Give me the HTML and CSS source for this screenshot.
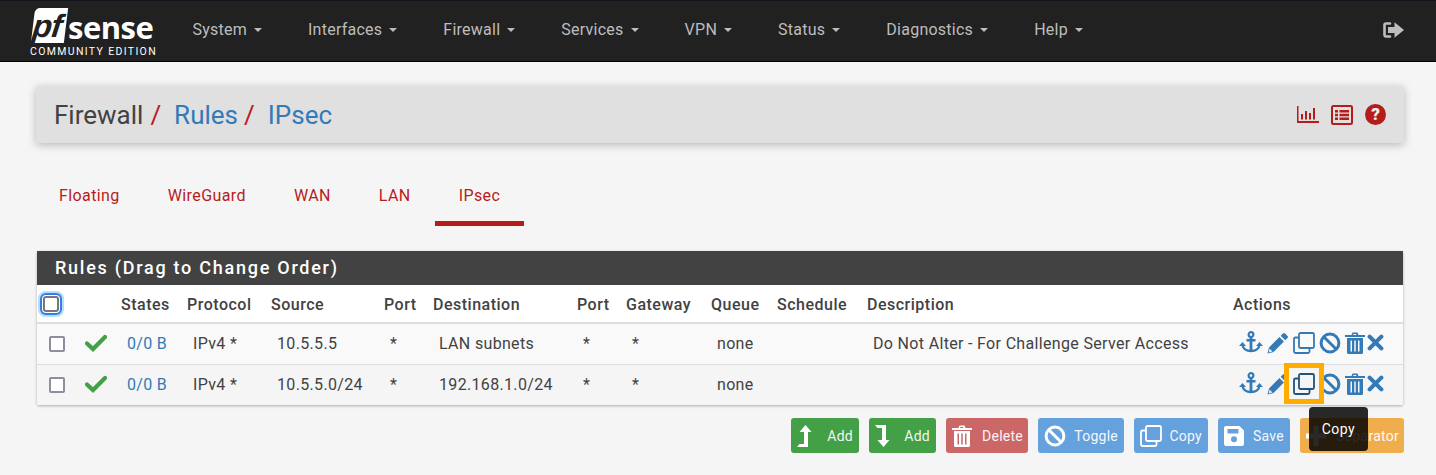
FILE: index.html
```html
<!DOCTYPE html>
<html lang="en">
<head>
<meta charset="utf-8">
<title>Firewall / Rules / IPsec</title>
<link rel="stylesheet" href="styles.css">
</head>
<body>
<svg class="defs" width="0" height="0" aria-hidden="true">
  <symbol id="i-anchor" viewBox="0 0 24 24"><circle cx="12" cy="3.6" r="2.4" fill="none" stroke="currentColor" stroke-width="2.2"/><path d="M10.6 6h2.8v14.2h-2.800zM7.500 8h9v2.400h-9z" fill="currentColor"/><path d="M3.500 13.500c.3 4 3.800 6.500 8.500 6.500s8.200-2.500 8.500-6.500" fill="none" stroke="currentColor" stroke-width="2.400"/><path d="M0 15l3.500-4 3.500 4zM17 15l3.500-4 3.500 4z" fill="currentColor"/></symbol>
  <symbol id="i-pencil" viewBox="0 0 22 22"><path d="M16 1.500a1.500 1.500 0 0 1 2.100 0l2.400 2.400a1.500 1.500 0 0 1 0 2.100l-2.300 2.300-4.500-4.500zM12.400 5.100l4.500 4.500L6.500 20l-6 1.500 1.500-6z" fill="currentColor"/><path d="M2.500 16.500l3 3-3.800 1z" fill="#fff" opacity=".85"/></symbol>
  <symbol id="i-copy" viewBox="0 0 22 22"><rect x="6" y="1" width="15" height="15" rx="1.500" fill="none" stroke="currentColor" stroke-width="1.800"/><path d="M6 5.500H2.500A1.500 1.500 0 0 0 1 7v12.500A1.500 1.500 0 0 0 2.500 21H15a1.500 1.500 0 0 0 1.500-1.500V16" fill="none" stroke="currentColor" stroke-width="1.800"/></symbol>
  <symbol id="i-ban" viewBox="0 0 22 22"><circle cx="11" cy="11" r="8.900" fill="none" stroke="currentColor" stroke-width="3"/><path d="M4.700 4.700l12.600 12.600" stroke="currentColor" stroke-width="3"/></symbol>
  <symbol id="i-trash" viewBox="0 0 20 22"><path d="M0 3h20v2H0zM6.500 3l1-2.500h5l1 2.500h-2l-.500-1h-2.500l-.5 1z" fill="currentColor"/><path d="M2 6h16v14.500a1.500 1.500 0 0 1-1.500 1.500h-13A1.500 1.500 0 0 1 2 20.500zM5.500 8.500V19.500h1.500V8.500zM9.250 8.500V19.500h1.500V8.500zM13 8.500V19.500h1.500V8.500z" fill="currentColor" fill-rule="evenodd"/></symbol>
  <symbol id="i-times" viewBox="0 0 18 18"><path d="M2.800 2.800l12.400 12.400M15.200 2.800L2.800 15.200" stroke="currentColor" stroke-width="4.400" stroke-linecap="round" fill="none"/></symbol>
  <symbol id="i-check" viewBox="0 0 22 18"><path d="M2 9.500l6 5.500L20 3" fill="none" stroke="currentColor" stroke-width="4.200" stroke-linecap="round"/></symbol>
  <symbol id="i-up" viewBox="0 0 15 22"><path d="M8.500 0l6 7h-3.500v15H0l2.500-3H7V7H2.500z" fill="currentColor"/></symbol>
  <symbol id="i-down" viewBox="0 0 15 22"><path d="M8.500 22l6-7h-3.500V0H0l2.500 3H7v12H2.500z" fill="currentColor"/></symbol>
  <symbol id="i-save" viewBox="0 0 20 20"><path d="M2 0h13.500L20 4.500V18a2 2 0 0 1-2 2H2a2 2 0 0 1-2-2V2a2 2 0 0 1 2-2zM3.500 3v4.500h11V3zM10 10.200a3 3 0 1 0 0 6 3 3 0 0 0 0-6z" fill="currentColor" fill-rule="evenodd"/></symbol>
  <symbol id="i-plus" viewBox="0 0 20 20"><path d="M7.500 0h5v7.500H20v5h-7.500V20h-5v-7.500H0v-5h7.500z" fill="currentColor"/></symbol>
  <symbol id="i-signout" viewBox="0 0 22 18"><path d="M8 2.500H4A1.500 1.500 0 0 0 2.500 4v10A1.500 1.500 0 0 0 4 15.500h4" fill="none" stroke="currentColor" stroke-width="2.600" stroke-linecap="round"/><path d="M6 6h6.500V1.200L22 9l-9.500 7.800V12H6z" fill="currentColor"/></symbol>
  <symbol id="i-chart" viewBox="0 0 22 17"><path d="M0 0h1.500v15H22v2H0zM4 8h2v5.500H4zM8 5h2v8.500H8zM12 7h2v6.500h-2zM16 2h2v11.500h-2z" fill="currentColor"/></symbol>
  <symbol id="i-list" viewBox="0 0 22 20"><rect x="1" y="1" width="20" height="18" rx="1.500" fill="none" stroke="currentColor" stroke-width="2"/><path d="M4 5h3v2.500H4zM8.500 5H18v2.500H8.500zM4 8.800h3v2.500H4zM8.500 8.800H18v2.500H8.500zM4 12.600h3v2.500H4zM8.500 12.600H18v2.500H8.500z" fill="currentColor"/></symbol>
</svg>

<header class="navbar">
  <div class="brand">
    <div class="brand-mark">
      <span class="pf-box"><span class="pf-text">pf</span></span>
      <span class="sense">sense</span>
    </div>
    <div class="edition">COMMUNITY EDITION</div>
  </div>
  <nav class="menu">
    <a class="menu-item">System<i class="caret"></i></a>
    <a class="menu-item">Interfaces<i class="caret"></i></a>
    <a class="menu-item">Firewall<i class="caret"></i></a>
    <a class="menu-item">Services<i class="caret"></i></a>
    <a class="menu-item">VPN<i class="caret"></i></a>
    <a class="menu-item">Status<i class="caret"></i></a>
    <a class="menu-item">Diagnostics<i class="caret"></i></a>
    <a class="menu-item">Help<i class="caret"></i></a>
  </nav>
  <svg class="signout"><use href="#i-signout"/></svg>
</header>

<main class="page">
  <section class="page-header">
    <h1 class="crumbs">Firewall<span class="sep">/</span><a class="crumb">Rules</a><span class="sep">/</span><a class="crumb">IPsec</a></h1>
    <div class="header-icons">
      <svg class="hi hi-chart"><use href="#i-chart"/></svg>
      <svg class="hi hi-list"><use href="#i-list"/></svg>
      <span class="help">?</span>
    </div>
  </section>

  <ul class="tabs">
    <li class="tab">Floating</li>
    <li class="tab">WireGuard</li>
    <li class="tab">WAN</li>
    <li class="tab">LAN</li>
    <li class="tab active">IPsec</li>
  </ul>

  <section class="panel">
    <h2 class="panel-title">Rules (Drag to Change Order)</h2>
    <table class="rules">
      <colgroup>
        <col class="c-sel"><col class="c-st"><col class="c-states"><col class="c-proto"><col class="c-src"><col class="c-port"><col class="c-dst"><col class="c-port"><col class="c-gw"><col class="c-queue"><col class="c-sched"><col class="c-desc"><col class="c-act">
      </colgroup>
      <thead>
        <tr>
          <th><span class="cb cb-focus"></span></th><th></th><th>States</th><th>Protocol</th><th>Source</th><th>Port</th><th>Destination</th><th>Port</th><th>Gateway</th><th>Queue</th><th>Schedule</th><th>Description</th><th>Actions</th>
        </tr>
      </thead>
      <tbody>
        <tr class="odd">
          <td class="sel"><span class="cb"></span></td>
          <td class="st"><svg class="check"><use href="#i-check"/></svg></td>
          <td><a class="link">0/0 B</a></td><td>IPv4 *</td><td>10.5.5.5</td><td>*</td><td>LAN subnets</td><td>*</td><td>*</td><td>none</td><td></td><td>Do Not Alter - For Challenge Server Access</td>
          <td class="act"><div class="acts">
            <svg class="a a-anchor"><use href="#i-anchor"/></svg><svg class="a a-pencil"><use href="#i-pencil"/></svg><svg class="a a-copy"><use href="#i-copy"/></svg><svg class="a a-ban"><use href="#i-ban"/></svg><svg class="a a-trash"><use href="#i-trash"/></svg><svg class="a a-times"><use href="#i-times"/></svg>
          </div></td>
        </tr>
        <tr class="even">
          <td class="sel"><span class="cb"></span></td>
          <td class="st"><svg class="check"><use href="#i-check"/></svg></td>
          <td><a class="link">0/0 B</a></td><td>IPv4 *</td><td>10.5.5.0/24</td><td>*</td><td>192.168.1.0/24</td><td>*</td><td>*</td><td>none</td><td></td><td></td>
          <td class="act"><div class="acts">
            <svg class="a a-anchor"><use href="#i-anchor"/></svg><svg class="a a-pencil"><use href="#i-pencil"/></svg><span class="focus-wrap"><svg class="a a-copy hot"><use href="#i-copy"/></svg><span class="focus-ring"></span><span class="tooltip">Copy</span></span><svg class="a a-ban"><use href="#i-ban"/></svg><svg class="a a-trash"><use href="#i-trash"/></svg><svg class="a a-times"><use href="#i-times"/></svg>
          </div></td>
        </tr>
      </tbody>
    </table>
  </section>

  <div class="toolbar">
    <a class="btn green"><svg class="bi bi-arrow"><use href="#i-up"/></svg><span>Add</span></a>
    <a class="btn green"><svg class="bi bi-arrow"><use href="#i-down"/></svg><span>Add</span></a>
    <a class="btn red"><svg class="bi bi-trash"><use href="#i-trash"/></svg><span>Delete</span></a>
    <a class="btn blue"><svg class="bi bi-ban"><use href="#i-ban"/></svg><span>Toggle</span></a>
    <a class="btn blue"><svg class="bi bi-copy"><use href="#i-copy"/></svg><span>Copy</span></a>
    <a class="btn blue"><svg class="bi bi-save"><use href="#i-save"/></svg><span>Save</span></a>
    <a class="btn orange"><svg class="bi bi-plus"><use href="#i-plus"/></svg><span>Separator</span></a>
  </div>
</main>
</body>
</html>
```
FILE: styles.css
```css
* { box-sizing: border-box; }
html, body { margin: 0; padding: 0; }
body {
  background: #f5f5f5;
  color: #424242;
  font-family: Roboto, "Liberation Sans", sans-serif;
  font-size: 16px;
  height: 475px;
  overflow: hidden;
}
.defs { position: absolute; }

.navbar {
  display: flex;
  align-items: center;
  height: 62px;
  padding: 0 32px 0 30px;
  background: #212121;
  border-top: 1px solid #14141c;
  border-bottom: 1px solid #000;
}
.brand { width: 127px; margin-top: 3px; color: #fff; }
.brand-mark { display: flex; align-items: flex-end; height: 35px; }
.pf-box {
  display: block;
  width: 33px;
  height: 35px;
  margin-left: 3px;
  background: #fff;
  border-radius: 5px 0 0 0;
  transform: skewX(-7deg);
}
.pf-text {
  display: block;
  margin: 2px 0 0 0;
  color: #212121;
  font: italic 700 32px/32px "Liberation Sans", sans-serif;
  letter-spacing: -1px;
}
.sense {
  margin: 0 0 5px 2px;
  font: 700 31px/22px "Open Sans", sans-serif;
  letter-spacing: -.5px;
}
.edition {
  margin-top: 3px;
  font-size: 10.500px;
  line-height: 12px;
  letter-spacing: 1.350px;
  white-space: nowrap;
}
.menu { display: flex; flex: 1; margin: 0 0 3px 12.400px; }
.menu-item {
  display: flex;
  align-items: center;
  padding: 0 23px;
  color: #bdbdbd;
  font-size: 16px;
  letter-spacing: .25px;
  white-space: nowrap;
}
.caret {
  width: 0;
  height: 0;
  margin-left: 7px;
  border: 4px solid transparent;
  border-top-color: #bdbdbd;
  border-bottom: 0;
}
.signout { width: 22px; height: 18px; margin-bottom: 3px; color: #bdbdbd; }

.page { padding: 24px 32px 0 36px; }
.page-header {
  display: flex;
  align-items: center;
  justify-content: space-between;
  height: 57px;
  padding: 0 18px;
  background: #e0e0e0;
  border-radius: 3px;
  box-shadow: 0 2px 8px rgba(0, 0, 0, .25);
}
.crumbs { margin: 0; font-size: 26px; font-weight: 400; color: #424242; }
.sep { margin: 0 13px 0 7px; color: #b71c1c; }
.crumb { color: #337ab7; }
.crumb + .sep { margin-left: 6px; }
.header-icons { display: flex; align-items: center; gap: 12px; color: #b71c1c; }
.hi { display: block; }
.hi-chart { width: 22px; height: 17px; }
.hi-list { width: 22px; height: 20px; }
.help {
  display: block;
  width: 21px;
  height: 21px;
  border-radius: 50%;
  background: #b71c1c;
  color: #f0f0f0;
  font-size: 17px;
  font-weight: 900;
  line-height: 21px;
  text-align: center;
}

.tabs {
  display: flex;
  list-style: none;
  margin: 27px 0 25px -1px;
  padding: 0;
}
.tab {
  height: 56px;
  padding: 17px 24px 0;
  color: #b71c1c;
  font-size: 16px;
  letter-spacing: .4px;
  line-height: 18px;
  white-space: nowrap;
}
.tab.active { border-bottom: 5px solid #b71c1c; }

.panel {
  margin: 0 1px;
  background: #fff;
  box-shadow: 0 1px 3px rgba(0, 0, 0, .3);
  border-radius: 2px;
}
.panel-title {
  margin: 0;
  height: 34px;
  padding: 0 18px;
  background: #424242;
  color: #fff;
  font-size: 18px;
  font-weight: 500;
  line-height: 34px;
  letter-spacing: 1.740px;
  white-space: nowrap;
}
.rules {
  width: 100%;
  table-layout: fixed;
  border-collapse: collapse;
  font-size: 16px;
  letter-spacing: .33px;
}
.c-sel { width: 43px; }
.c-st { width: 36px; }
.c-states { width: 66px; }
.c-proto { width: 84px; }
.c-src { width: 113px; }
.c-port { width: 49px; }
.c-dst { width: 144px; }
.c-gw { width: 85px; }
.c-queue { width: 66px; }
.c-sched { width: 90px; }
.c-desc { width: 366px; }
.rules th {
  height: 38px;
  padding: 1px 0 0 5px;
  border-bottom: 2px solid #ddd;
  color: #424242;
  font-weight: 500;
  letter-spacing: .5px;
  text-align: left;
  white-space: nowrap;
}
.rules td {
  height: 41px;
  padding: 0 0 0 11px;
  border-bottom: 1px solid #ddd;
  white-space: nowrap;
}
.rules tbody tr:last-child td { border-bottom: 0; }
.odd { background: #f9f9f9; }
.even { background: #f5f5f5; }
.rules td.sel, .rules td.st { padding-left: 0; }
.link { color: #337ab7; }
.cb {
  display: block;
  width: 16px;
  height: 16px;
  margin-left: 12px;
  background: #fff;
  border: 2px solid #8e8e9c;
  border-radius: 2px;
}
.cb-focus {
  margin: 0 0 0 1px;
  border-color: #77777f;
  box-shadow: 0 0 0 1px #fff, 0 0 0 3px #2f7fe6, 0 0 0 5px #bcdcfb;
  border-radius: 3px;
}
.check { display: block; width: 22px; height: 18px; margin: -2px 0 0 5px; color: #43a047; }
.rules td.act { padding: 0 0 0 11px; }
.acts { display: flex; align-items: center; margin-top: -2px; color: #337ab7; }
.a { display: block; flex: none; }
.a-anchor { width: 24px; height: 24px; margin-right: 4px; }
.a-pencil { width: 22px; height: 22px; margin-right: 4px; }
.a-copy { width: 22px; height: 22px; }
.focus-wrap { position: relative; display: block; flex: none; width: 22px; height: 22px; }
.a-ban { width: 22px; height: 22px; margin-left: 4px; margin-right: 4px; }
.a-trash { width: 20px; height: 22px; margin-right: 2px; }
.a-times { width: 17px; height: 17px; }
.hot { color: #23527c; }
.focus-ring {
  position: absolute;
  left: -9px;
  top: -10px;
  width: 40px;
  height: 41px;
  border: 5px solid #ffab00;
}
.tooltip {
  position: absolute;
  z-index: 5;
  left: 16px;
  top: 34px;
  width: 59px;
  height: 44px;
  padding-top: 13px;
  background: rgba(0, 0, 0, .84);
  border-radius: 4px;
  color: #fff;
  font-size: 14px;
  letter-spacing: .5px;
  line-height: 18px;
  text-align: center;
}

.toolbar {
  display: flex;
  justify-content: flex-end;
  gap: 10px;
  margin-top: 13px;
}
.btn {
  display: flex;
  align-items: center;
  justify-content: space-between;
  height: 35px;
  padding: 0 6px;
  border-radius: 3px;
  color: #fff;
  font-size: 14px;
  letter-spacing: .25px;
}
.btn span { opacity: .92; }
.green { width: 68px; background: #43a047; }
.green + .green { width: 67px; }
.red { width: 82px; background: #cb6767; padding-right: 5px; }
.blue { background: #65a1dd; }
.blue:nth-child(4) { width: 86px; }
.blue:nth-child(5) { width: 74px; }
.blue:nth-child(6) { width: 72px; }
.orange { width: 104px; background: #f0ad4e; padding-right: 5px; }
.bi { display: block; flex: none; }
.bi-arrow { width: 15px; height: 22px; }
.bi-trash { width: 20px; height: 22px; }
.bi-ban { width: 22px; height: 22px; }
.bi-copy { width: 22px; height: 22px; }
.bi-save { width: 20px; height: 20px; }
.bi-plus { width: 20px; height: 20px; }
```
